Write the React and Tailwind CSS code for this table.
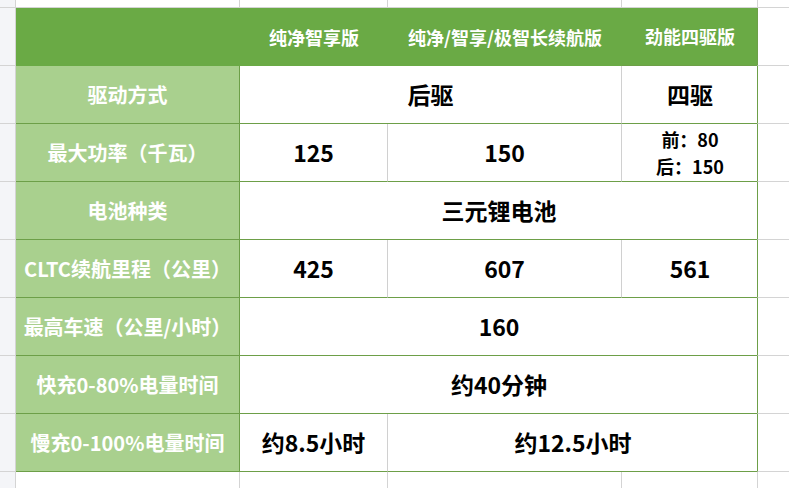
import React from 'react';
import clsx from 'clsx';

const FONT = { fontFamily: '"Noto Sans CJK SC", "Microsoft YaHei", sans-serif' };

const Strip = ({ last = false }) => (
  <div className={clsx('bg-[#f4f5f8] border-r border-[#d4d4d4]', !last && 'border-b')} />
);

const Label = ({ children }) => (
  <div className="flex items-center justify-center bg-[#a9d08e] border-r border-b border-[#6d9f48] text-white text-[20px] font-bold whitespace-nowrap">
    {children}
  </div>
);

const Data = ({ children, span = 'col-span-1', grid = true, small = false }) => (
  <div
    className={clsx(
      'flex items-center justify-center bg-white border-b border-[#6d9f48] text-black font-bold whitespace-nowrap',
      span,
      grid && 'border-r border-r-[#d0d0d0]',
      small ? 'text-[18px] leading-[27px] flex-col' : 'text-[23px]'
    )}
  >
    {children}
  </div>
);

const Edge = () => <div className="border-l border-[#6d9f48] border-b border-b-[#d4d4d4] -ml-px" />;

const App = () => {
  return (
    <div
      style={FONT}
      className="w-[789px] h-[488px] overflow-hidden bg-white grid grid-cols-[16px_224px_148px_234px_136px_1fr] grid-rows-[8px_repeat(8,58px)_1fr]"
    >
      {/* row 0: sliver of the row above */}
      <Strip />
      <div className="border-r border-b border-[#d4d4d4]" />
      <div className="border-r border-b border-[#d4d4d4]" />
      <div className="border-r border-b border-[#d4d4d4]" />
      <div className="border-r border-b border-[#d4d4d4]" />
      <div className="border-b border-[#d4d4d4]" />

      {/* header */}
      <Strip />
      <div className="bg-[#6aaa45]" />
      <div className="flex items-center justify-center bg-[#6aaa45] text-white text-[18px] font-bold">纯净智享版</div>
      <div className="flex items-center justify-center bg-[#6aaa45] text-white text-[18px] font-bold whitespace-nowrap">纯净/智享/极智长续航版</div>
      <div className="flex items-center justify-center bg-[#6aaa45] text-white text-[18px] font-bold border-b border-[#6d9f48]">劲能四驱版</div>
      <Edge />

      <Strip />
      <Label>驱动方式</Label>
      <Data span="col-span-2">后驱</Data>
      <Data grid={false}>四驱</Data>
      <Edge />

      <Strip />
      <Label>最大功率（千瓦）</Label>
      <Data>125</Data>
      <Data>150</Data>
      <Data grid={false} small>
        <span>前：80</span>
        <span>后：150</span>
      </Data>
      <Edge />

      <Strip />
      <Label>电池种类</Label>
      <Data span="col-span-3" grid={false}>三元锂电池</Data>
      <Edge />

      <Strip />
      <Label>CLTC续航里程（公里）</Label>
      <Data>425</Data>
      <Data>607</Data>
      <Data grid={false}>561</Data>
      <Edge />

      <Strip />
      <Label>最高车速（公里/小时）</Label>
      <Data span="col-span-3" grid={false}>160</Data>
      <Edge />

      <Strip />
      <Label>快充0-80%电量时间</Label>
      <Data span="col-span-3" grid={false}>约40分钟</Data>
      <Edge />

      <Strip />
      <Label>慢充0-100%电量时间</Label>
      <Data>约8.5小时</Data>
      <Data span="col-span-2" grid={false}>约12.5小时</Data>
      <Edge />

      {/* row below the table */}
      <Strip last />
      <div className="border-r border-[#d4d4d4]" />
      <div className="border-r border-[#d4d4d4]" />
      <div className="border-r border-[#d4d4d4]" />
      <div className="border-r border-[#d4d4d4]" />
      <div />
    </div>
  );
};

export default App;
